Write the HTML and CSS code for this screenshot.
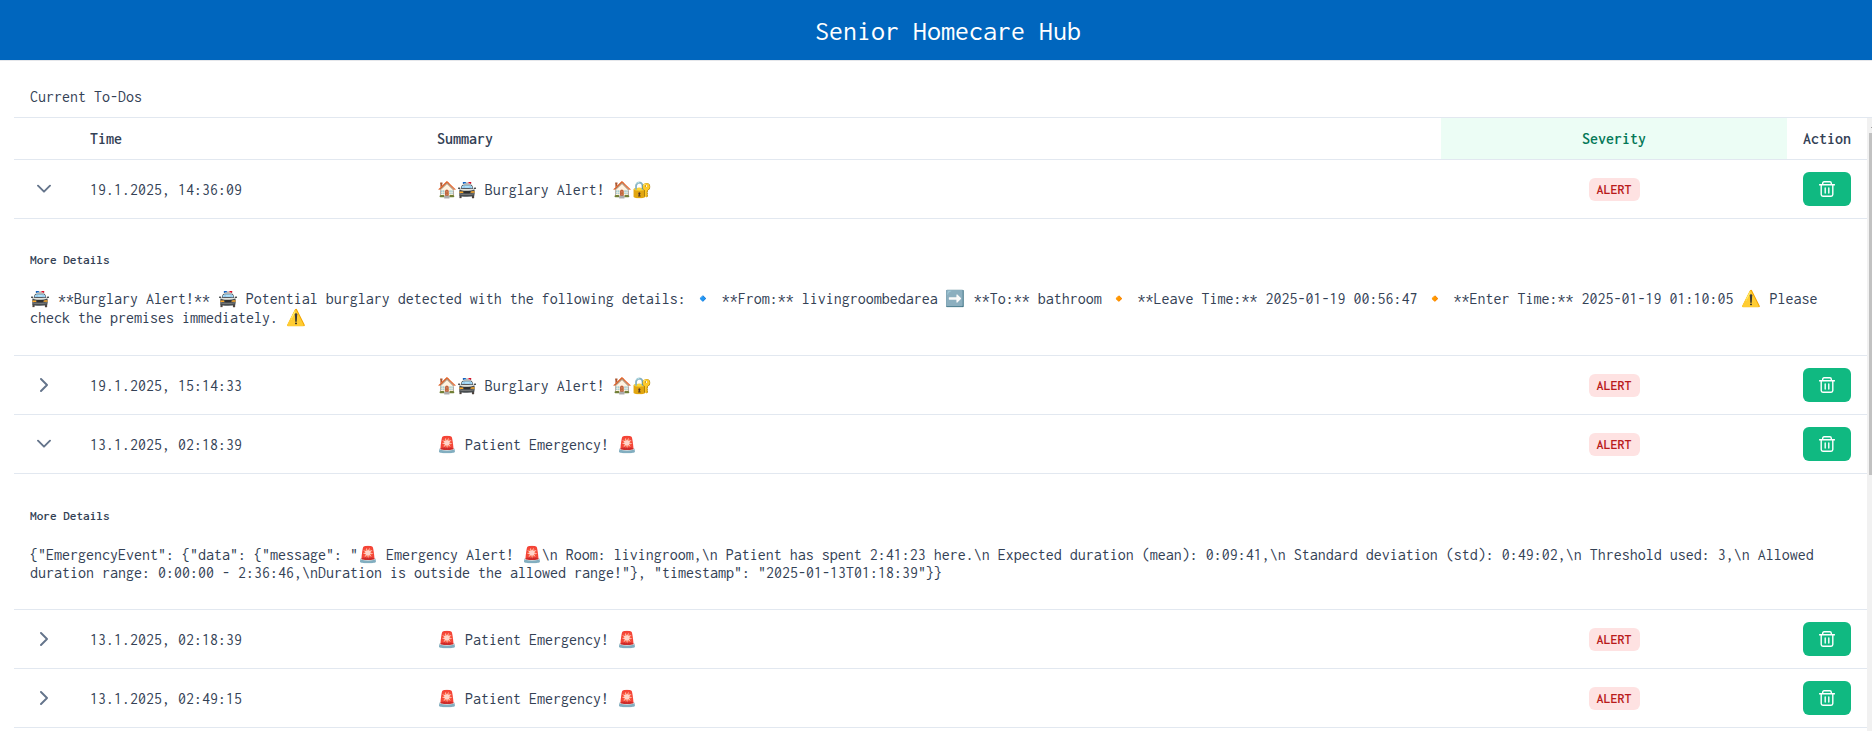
FILE: index.html
```
<!DOCTYPE html>
<html lang="en">
<head>
<meta charset="utf-8">
<title>Senior Homecare Hub</title>
<link rel="stylesheet" href="styles.css">
</head>
<body>
<svg width="0" height="0" class="defs" aria-hidden="true">
  <symbol id="down" viewBox="0 0 14 14"><path d="M1 3.7l6 6 6-6"/></symbol>
  <symbol id="right" viewBox="0 0 14 14"><path d="M4 1l6 6-6 6"/></symbol>
  <symbol id="trash" viewBox="0 0 16 16"><path d="M.6 3.7h14.8M3.7 3.5V2.2Q3.7.8 5.1.8h5.8q1.4 0 1.4 1.4v1.3M2.2 3.9v9.6q0 1.7 1.7 1.7h8.2q1.7 0 1.7-1.7V3.9M6.2 7v5M9.8 7v5"/></symbol>
</svg>
<header class="topbar"><h1>Senior Homecare Hub</h1></header>
<main class="card">
  <h2 class="caption">Current To-Dos</h2>
  <div class="scroller">
    <div class="table">
      <div class="row head"><span></span><span>Time</span><span>Summary</span><span class="sorted">Severity</span><span class="center">Action</span></div>

      <div class="row"><svg class="chevron"><use href="#down"/></svg><span>19.1.2025, 14:36:09</span><span>🏠🚔 Burglary Alert! 🏠🔐</span><span class="center"><b class="tag">ALERT</b></span><button class="delete" aria-label="Delete"><svg><use href="#trash"/></svg></button></div>
      <section class="details">
        <h5>More Details</h5>
        <p class="tall">🚔 **Burglary Alert!** 🚔 Potential burglary detected with the following details: 🔹 **From:** livingroombedarea ➡️ **To:** bathroom 🔸 **Leave Time:** 2025-01-19 00:56:47 🔸 **Enter Time:** 2025-01-19 01:10:05 ⚠️ Please<br>check the premises immediately. ⚠️</p>
      </section>

      <div class="row"><svg class="chevron"><use href="#right"/></svg><span>19.1.2025, 15:14:33</span><span>🏠🚔 Burglary Alert! 🏠🔐</span><span class="center"><b class="tag">ALERT</b></span><button class="delete" aria-label="Delete"><svg><use href="#trash"/></svg></button></div>

      <div class="row"><svg class="chevron"><use href="#down"/></svg><span>13.1.2025, 02:18:39</span><span>🚨 Patient Emergency! 🚨</span><span class="center"><b class="tag">ALERT</b></span><button class="delete" aria-label="Delete"><svg><use href="#trash"/></svg></button></div>
      <section class="details compact">
        <h5>More Details</h5>
        <p>{"EmergencyEvent": {"data": {"message": "🚨 Emergency Alert! 🚨\n Room: livingroom,\n Patient has spent 2:41:23 here.\n Expected duration (mean): 0:09:41,\n Standard deviation (std): 0:49:02,\n Threshold used: 3,\n Allowed<br>duration range: 0:00:00 - 2:36:46,\nDuration is outside the allowed range!"}, "timestamp": "2025-01-13T01:18:39"}}</p>
      </section>

      <div class="row"><svg class="chevron"><use href="#right"/></svg><span>13.1.2025, 02:18:39</span><span>🚨 Patient Emergency! 🚨</span><span class="center"><b class="tag">ALERT</b></span><button class="delete" aria-label="Delete"><svg><use href="#trash"/></svg></button></div>

      <div class="row"><svg class="chevron"><use href="#right"/></svg><span>13.1.2025, 02:49:15</span><span>🚨 Patient Emergency! 🚨</span><span class="center"><b class="tag">ALERT</b></span><button class="delete" aria-label="Delete"><svg><use href="#trash"/></svg></button></div>
    </div>
    <div class="scrollbar"><div class="arrow"></div><div class="thumb"></div></div>
  </div>
</main>
</body>
</html>
```
FILE: styles.css
```
* { box-sizing: border-box; }
html, body { height: 100%; overflow: hidden; }
body {
  margin: 0;
  background: #fff;
  color: #334155;
  font: 16px/18px Inconsolata, "Noto Color Emoji", monospace;
}
.defs { position: absolute; }
.topbar {
  display: flex;
  align-items: center;
  justify-content: center;
  height: 61px;
  padding: 2px 0 0 24px;
  background: #0066be;
  border-bottom: 1px solid #e5e7eb;
  color: #fff;
}
.topbar h1 {
  margin: 0;
  font-size: 28px;
  line-height: 32px;
  font-weight: 400;
}
.card { padding-left: 14px; }
.caption {
  margin: 0;
  height: 57px;
  padding: 27px 0 0 16px;
  border-bottom: 1px solid #e2e8f0;
  font-size: 16px;
  line-height: 18px;
  font-weight: 400;
}
.scroller { display: flex; height: 613px; }
.table { width: 1853px; flex: none; }
.row {
  display: grid;
  grid-template-columns: 60px 347px 1020px 346px 80px;
  align-items: center;
  height: 59px;
  border-bottom: 1px solid #e2e8f0;
}
.row > span { padding: 1px 16px 0; white-space: nowrap; }
.row > .center { padding-top: 0; text-align: center; }
.head { height: 42px; font-weight: 600; align-items: stretch; line-height: 40px; }
.head > .center { padding-top: 1px; }
.row > .sorted { background: #ecfdf5; color: #047857; text-align: center; }
.chevron {
  width: 14px;
  height: 14px;
  margin-left: 23px;
  fill: none;
  stroke: #64748b;
  stroke-width: 1.9;
  stroke-linecap: round;
  stroke-linejoin: round;
}
.tag {
  display: inline-block;
  width: 51px;
  height: 23px;
  border-radius: 6px;
  background: #fee2e2;
  color: #b91c1c;
  font-size: 14px;
  font-weight: 600;
  line-height: 23px;
  vertical-align: middle;
}
.delete {
  display: flex;
  align-items: center;
  justify-content: center;
  width: 48px;
  height: 34px;
  margin-left: 16px;
  padding: 0;
  border: 0;
  border-radius: 6px;
  background: #10b981;
}
.delete svg {
  width: 16px;
  height: 16px;
  fill: none;
  stroke: #fff;
  stroke-width: 1.4;
  stroke-linecap: round;
}
.details {
  height: 137px;
  padding: 32px 16px 0;
  border-bottom: 1px solid #e2e8f0;
}
.compact { height: 136px; padding-top: 33px; }
.details h5 {
  margin: 0;
  font-size: 13.28px;
  line-height: 18px;
  font-weight: 600;
}
.details p { margin: 21px 0 0; line-height: 18px; white-space: nowrap; }
.details .tall { margin-top: 20px; line-height: 19px; }
.scrollbar {
  flex: 1;
  min-width: 0;
  padding-left: 2px;
  background: #f1f1f1;
}
.arrow {
  width: 1px;
  height: 15px;
  margin-left: auto;
  background: linear-gradient(#a3a3a3, #a3a3a3) 0 9px / 1px 1px no-repeat;
}
.thumb { height: 342px; background: #c1c1c1; }
```
